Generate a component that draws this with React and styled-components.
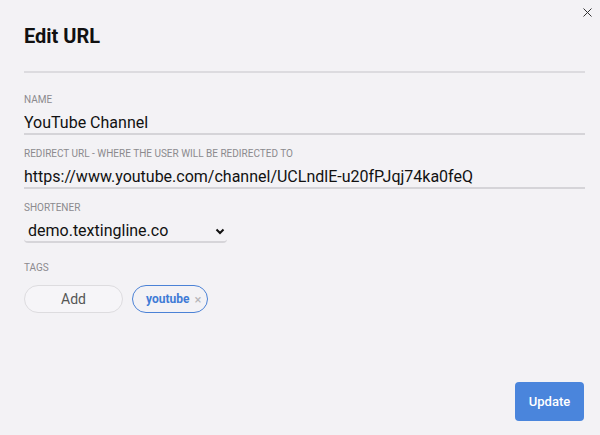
import React, { useState } from 'react'
import styled, { createGlobalStyle } from 'styled-components';

const GlobalStyle = createGlobalStyle`
    html, body {
        margin: 0;
        padding: 0;
        background: #f3f2f5;
    }
    body {
        font-family: Roboto, "Liberation Sans", sans-serif;
        color: #111;
    }
`;

const App = () => {
    const [name, setName] = useState('YouTube Channel');
    const [url, setUrl] = useState('https://www.youtube.com/channel/UCLndlE-u20fPJqj74ka0feQ');
    const [tags, setTags] = useState(['youtube']);

    return (
        <Modal>
            <GlobalStyle />
            <Close aria-label="close">
                <svg width="9" height="9" viewBox="0 0 9 9">
                    <path d="M0.5 0.5 L8.5 8.5 M8.5 0.5 L0.5 8.5" stroke="#333" strokeWidth="1" />
                </svg>
            </Close>
            <Title>Edit URL</Title>
            <Divider />
            <Field>
                <Label>Name</Label>
                <Input value={name} onChange={e => setName(e.target.value)} />
            </Field>
            <Field>
                <Label>Redirect URL - where the user will be redirected to</Label>
                <Input value={url} onChange={e => setUrl(e.target.value)} />
            </Field>
            <Field $gap={18}>
                <Label>Shortener</Label>
                <SelectWrap>
                    <Select defaultValue="demo.textingline.co">
                        <option>demo.textingline.co</option>
                    </Select>
                    <Chevron width="10" height="7" viewBox="0 0 10 7">
                        <path d="M1.5 1.5 L5 5 L8.5 1.5" fill="none" stroke="#111" strokeWidth="2" />
                    </Chevron>
                </SelectWrap>
            </Field>
            <Field>
                <Label>Tags</Label>
                <TagRow>
                    <AddButton>Add</AddButton>
                    {tags.map(tag => (
                        <Tag key={tag}>
                            {tag}
                            <TagRemove onClick={() => setTags(tags.filter(t => t !== tag))}>×</TagRemove>
                        </Tag>
                    ))}
                </TagRow>
            </Field>
            <Footer>
                <UpdateButton>Update</UpdateButton>
            </Footer>
        </Modal>
    )
}

const Modal = styled.div `
    position: relative;
    width: 600px;
    height: 435px;
    box-sizing: border-box;
    padding: 24px 15px 14px 24px;
    display: flex;
    flex-direction: column;
`;

const Close = styled.button `
    position: absolute;
    top: 7px;
    right: 7px;
    width: 11px;
    height: 11px;
    padding: 0;
    border: none;
    background: none;
    display: flex;
    align-items: center;
    justify-content: center;
`;

const Title = styled.h2 `
    margin: 0;
    font-size: 20px;
    line-height: 24px;
    font-weight: 700;
    color: #111;
`;

const Divider = styled.hr `
    margin: 23px 0 20px;
    border: none;
    height: 2px;
    background: #dcdbdf;
`;

const Field = styled.div `
    display: flex;
    flex-direction: column;
    margin-bottom: ${p => p.$gap || 12}px;
`;

const Label = styled.label `
    padding-top: 1px;
    font-size: 10px;
    line-height: 12px;
    text-transform: uppercase;
    color: #8b8a8e;
    margin-bottom: 7px;
`;

const Input = styled.input `
    font-family: Roboto, "Liberation Sans", sans-serif;
    font-size: 16px;
    line-height: 20px;
    height: 20px;
    padding: 0;
    border: none;
    border-bottom: 2px solid #d5d4d8;
    background: transparent;
    color: #111;
    outline: none;
`;

const SelectWrap = styled.div `
    position: relative;
    width: 203px;
`;

const Select = styled.select `
    appearance: none;
    width: 100%;
    font-family: Roboto, "Liberation Sans", sans-serif;
    font-size: 16px;
    line-height: 20px;
    height: 22px;
    padding: 0 0 0 4px;
    border: none;
    border-bottom: 2px solid #d6d5d9;
    border-radius: 0 0 4px 4px;
    background: transparent;
    color: #111;
    outline: none;
`;

const Chevron = styled.svg `
    position: absolute;
    right: 2px;
    top: 7px;
    pointer-events: none;
`;

const TagRow = styled.div `
    display: flex;
    gap: 9px;
    margin-top: 4px;
`;

const AddButton = styled.button `
    width: 99px;
    height: 28px;
    border: 1px solid #dddcdf;
    border-radius: 14px;
    background: #f6f5f8;
    font-family: Roboto, "Liberation Sans", sans-serif;
    font-size: 14px;
    color: #555;
`;

const Tag = styled.div `
    display: flex;
    align-items: center;
    height: 28px;
    box-sizing: border-box;
    padding: 0 6px 0 13px;
    border: 1px solid #4b82d6;
    border-radius: 14px;
    font-size: 12px;
    font-weight: 700;
    color: #3f7bd6;
`;

const TagRemove = styled.span `
    margin-left: 5px;
    font-size: 13px;
    font-weight: 400;
    color: #b5b5b8;
    cursor: pointer;
`;

const Footer = styled.div `
    margin-top: auto;
    display: flex;
    justify-content: flex-end;
    padding-right: 1px;
`;

const UpdateButton = styled.button `
    width: 69px;
    height: 39px;
    border: none;
    border-radius: 4px;
    background: #4a85dc;
    color: #fff;
    font-family: Roboto, "Liberation Sans", sans-serif;
    font-size: 13px;
    font-weight: 500;
`;

export default App;
